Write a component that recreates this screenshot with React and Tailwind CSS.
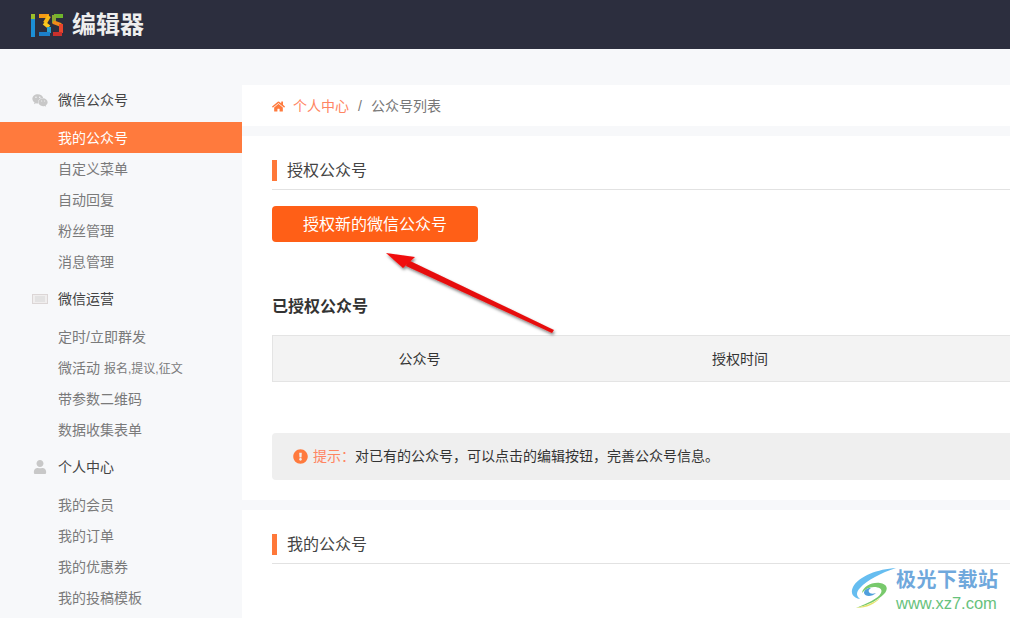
import { FaWeixin, FaUser, FaHome, FaExclamationCircle } from "react-icons/fa";

const groups = [
  {
    title: "微信公众号",
    icon: <FaWeixin className="text-[17px] text-[#c8c8c8]" />,
    items: [
      { label: "我的公众号" },
      { label: "自定义菜单" },
      { label: "自动回复" },
      { label: "粉丝管理" },
      { label: "消息管理" },
    ],
  },
  {
    title: "微信运营",
    icon: <KeyboardIcon />,
    items: [
      { label: "定时/立即群发" },
      { label: "微活动", note: "报名,提议,征文" },
      { label: "带参数二维码" },
      { label: "数据收集表单" },
    ],
  },
  {
    title: "个人中心",
    icon: <FaUser className="text-[14px] text-[#c8c8c8]" />,
    items: [
      { label: "我的会员" },
      { label: "我的订单" },
      { label: "我的优惠券" },
      { label: "我的投稿模板" },
    ],
  },
];

function KeyboardIcon() {
  return (
    <svg width="16" height="10" viewBox="0 0 16 10">
      <rect x="0.5" y="0.5" width="15" height="9" fill="#f0eeee" stroke="#dcd6d6" />
      <path d="M3 3h10M3 5h10M3 7h10" stroke="#cfcfcf" strokeWidth="0.8" />
    </svg>
  );
}

function Logo() {
  return (
    <svg width="34" height="24" viewBox="30 10 34 24" fill="none" strokeWidth="4" className="mr-[8px]">
      <path d="M33 11v5" stroke="#9bbf2a" />
      <path d="M33 16v18" stroke="#1c8fd6" />
      <path d="M39 13h10" stroke="#f59a14" />
      <path d="M49 13l-4 7" stroke="#f7b916" />
      <path d="M44 20l5 4" stroke="#f7c81e" />
      <path d="M49 24v6" stroke="#27a0cf" />
      <path d="M50 31H39" stroke="#1c7fc9" />
      <path d="M63 13h-9" stroke="#6fb52c" />
      <path d="M54 12v8" stroke="#8aa832" />
      <path d="M53 19l8 3" stroke="#f28a1a" />
      <path d="M61 21v9" stroke="#e8452c" />
      <path d="M62 31h-9" stroke="#c9302c" />
    </svg>
  );
}

function SectionTitle({ children }) {
  return (
    <div className="flex h-[31px] items-center border-b border-[#e2e2e2] pb-[8px]">
      <span className="mr-[10px] h-[21px] w-[5px] bg-[#ff7839]" />
      <span className="pt-[2px] text-[16px] text-[#444]">{children}</span>
    </div>
  );
}

export default function App() {
  return (
    <div
      className="relative h-[618px] w-[1010px] overflow-hidden bg-[#f7f8fa]"
      style={{ fontFamily: '"Liberation Sans", "Noto Sans CJK SC", sans-serif' }}
    >
      <header className="flex h-[49px] items-center bg-[#2c2e3e] pl-[30px]">
        <Logo />
        <span className="text-[24px] font-bold text-[#eeeeee]">编辑器</span>
      </header>

      <div className="flex pt-[36px]">
        <aside className="w-[242px] shrink-0">
          {groups.map((group) => (
            <div key={group.title} className="mb-[7px]">
              <div className="mb-[7px] flex h-[30px] items-center">
                <span className="ml-[32px] mr-[10px] flex w-[16px] justify-center">{group.icon}</span>
                <span className="text-[14px] text-[#444]">{group.title}</span>
              </div>
              {group.items.map((item) => (
                <div
                  key={item.label}
                  className={
                    item.label === "我的公众号"
                      ? "flex h-[31px] items-center bg-[#ff7a3d] pt-[2px] pl-[58px] text-[14px] text-white"
                      : "flex h-[31px] items-center pt-[2px] pl-[58px] text-[14px] text-[#7a7a7a]"
                  }
                >
                  {item.label}
                  {item.note && <span className="ml-[4px] text-[12px]">{item.note}</span>}
                </div>
              ))}
            </div>
          ))}
        </aside>

        <main className="min-w-0 flex-1">
          <div className="mb-[10px] flex h-[41px] items-center bg-white pt-[2px] pl-[30px] text-[14px]">
            <FaHome className="mr-[8px] text-[13px] text-[#ff7a3d]" />
            <span className="text-[#ff8562]">个人中心</span>
            <span className="mx-[9px] text-[#777]">/</span>
            <span className="text-[#777]">公众号列表</span>
          </div>

          <section className="mb-[10px] h-[364px] overflow-hidden bg-white pt-[23px] pl-[30px]">
            <SectionTitle>授权公众号</SectionTitle>
            <button className="mt-[16px] flex h-[36px] w-[206px] items-center justify-center rounded-[4px] bg-[#ff5f17] pt-[2px] text-[16px] text-white">
              授权新的微信公众号
            </button>
            <h3 className="mt-[53px] text-[16px] leading-[24px] font-bold text-[#333]">已授权公众号</h3>
            <div className="mt-[16px] -mr-[10px] grid h-[47px] grid-cols-[293px_348px_1fr] items-center border border-[#e4e4e4] bg-[#f3f3f3] pt-[1px] text-[14px] text-[#333]">
              <span className="text-center">公众号</span>
              <span className="text-center">授权时间</span>
            </div>
            <div className="mt-[51px] -mr-[10px] flex h-[47px] items-center rounded-[4px] bg-[#efefef] pl-[21px] text-[14px]">
              <FaExclamationCircle className="mr-[5px] text-[15px] text-[#ff7a3d]" />
              <span className="text-[#ff8562]">提示：</span>
              <span className="text-[#333]">对已有的公众号，可以点击的编辑按钮，完善公众号信息。</span>
            </div>
          </section>

          <section className="h-[200px] bg-white pt-[23px] pl-[30px]">
            <SectionTitle>我的公众号</SectionTitle>
          </section>
        </main>
      </div>

      {/* annotation arrow drawn over the screenshot */}
      <svg className="absolute top-[245px] left-[375px]" width="190" height="100" viewBox="375 245 190 100">
        <defs>
          <filter id="arrowShadow" x="-10%" y="-10%" width="120%" height="130%">
            <feDropShadow dx="1" dy="2" stdDeviation="1.5" floodColor="#000" floodOpacity="0.5" />
          </filter>
        </defs>
        <g filter="url(#arrowShadow)">
          <path d="M552 333L406 266l2-6 146 70z" fill="#e60d0d" />
          <path d="M386 253l29 4-12 11z" fill="#f00b0b" />
        </g>
      </svg>

      {/* watermark */}
      <div className="absolute top-[568px] left-[850px] flex items-start">
        <svg width="46" height="41" viewBox="0 0 46 41" className="shrink-0">
          <path d="M46 0C28 1 9 8 3 19c-3 6 0 11 7 12-4-3-4-7 0-11C17 12 31 5 46 0z" fill="#66bdf0" />
          <path d="M12 25c1-6 9-11 18-10 7 1 9 6 4 11-6 6-15 11-28 14 11-5 22-9 25-15 2-4-2-6-7-6-5 0-9 2-12 6z" fill="#78c96c" />
          <path d="M6 40c9-2 17-5 24-10-5 6-13 10-24 10z" fill="#e5e36c" />
          <path d="M14 25c0-3 3-5 7-5-2 1-3 3-2 4 1 2 4 2 7 1-4 4-11 4-12 0z" fill="#4f9fdc" />
        </svg>
        <div className="flex flex-col">
          <span className="text-[20px] leading-[24px] font-bold tracking-[0.5px] text-[#6fa8dc]">极光下载站</span>
          <span className="text-[16.5px] leading-[22px] text-[#67c27c]">www.xz7.com</span>
        </div>
      </div>
    </div>
  );
}
